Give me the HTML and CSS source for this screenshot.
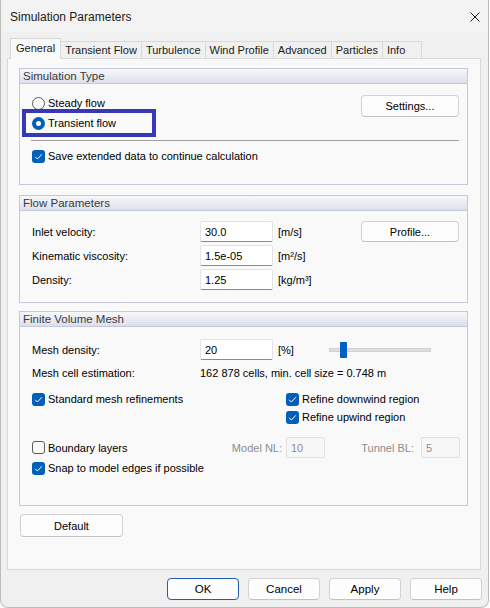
FILE: index.html
```html
<!DOCTYPE html>
<html lang="en">
<head>
  <meta charset="UTF-8" />
  <title>Simulation Parameters</title>
  <link rel="stylesheet" href="styles.css">
</head>
<body>
  <div class="window">
    <div class="titlebar">
      <span class="title">Simulation Parameters</span>
      <span class="close">
        <svg width="10" height="10" viewBox="0 0 10 10"><path d="M0.5 0.5 L9.5 9.5 M9.5 0.5 L0.5 9.5" stroke="#1b1b1b" stroke-width="1" fill="none"/></svg>
      </span>
    </div>

    <div class="tabs">
      <div class="tab active">General</div>
      <div class="tab">Transient Flow</div>
      <div class="tab">Turbulence</div>
      <div class="tab">Wind Profile</div>
      <div class="tab">Advanced</div>
      <div class="tab">Particles</div>
      <div class="tab">Info</div>
    </div>

    <div class="panel">
      <!-- simulation type -->
      <div class="group group-type">
        <div class="group-head">Simulation Type</div>
        <div class="group-body">
          <div class="type-row">
            <div class="radios">
              <label class="radio"><span class="dot"></span>Steady flow</label>
              <label class="radio checked marked"><span class="dot"></span>Transient flow</label>
            </div>
            <button class="btn side-btn">Settings...</button>
          </div>
          <div class="separator"></div>
          <label class="check checked"><span class="box"><svg width="13" height="13" viewBox="0 0 13 13"><path d="M3.2 6.8 L5.4 9 L9.8 4.3" stroke="#fff" stroke-width="1" fill="none"/></svg></span>Save extended data to continue calculation</label>
        </div>
      </div>

      <!-- flow parameters -->
      <div class="group group-flow">
        <div class="group-head">Flow Parameters</div>
        <div class="group-body">
          <div class="field-row">
            <span class="field-label">Inlet velocity:</span>
            <input class="field" type="text" value="30.0">
            <span class="unit">[m/s]</span>
            <button class="btn side-btn">Profile...</button>
          </div>
          <div class="field-row">
            <span class="field-label">Kinematic viscosity:</span>
            <input class="field" type="text" value="1.5e-05">
            <span class="unit">[m²/s]</span>
          </div>
          <div class="field-row">
            <span class="field-label">Density:</span>
            <input class="field" type="text" value="1.25">
            <span class="unit">[kg/m³]</span>
          </div>
        </div>
      </div>

      <!-- mesh -->
      <div class="group group-mesh">
        <div class="group-head">Finite Volume Mesh</div>
        <div class="group-body">
          <div class="field-row">
            <span class="field-label">Mesh density:</span>
            <input class="field" type="text" value="20">
            <span class="unit unit-wide">[%]</span>
            <div class="slider"><div class="track"></div><div class="thumb"></div></div>
          </div>
          <div class="text-row estimate">
            <span class="field-label">Mesh cell estimation:</span>
            <span>162 878 cells, min. cell size = 0.748 m</span>
          </div>
          <div class="text-row refine">
            <label class="check checked col-left"><span class="box"><svg width="13" height="13" viewBox="0 0 13 13"><path d="M3.2 6.8 L5.4 9 L9.8 4.3" stroke="#fff" stroke-width="1" fill="none"/></svg></span>Standard mesh refinements</label>
            <label class="check checked"><span class="box"><svg width="13" height="13" viewBox="0 0 13 13"><path d="M3.2 6.8 L5.4 9 L9.8 4.3" stroke="#fff" stroke-width="1" fill="none"/></svg></span>Refine downwind region</label>
          </div>
          <div class="text-row tight">
            <span class="col-left"></span>
            <label class="check checked"><span class="box"><svg width="13" height="13" viewBox="0 0 13 13"><path d="M3.2 6.8 L5.4 9 L9.8 4.3" stroke="#fff" stroke-width="1" fill="none"/></svg></span>Refine upwind region</label>
          </div>
          <div class="field-row layers">
            <label class="check layers-check"><span class="box"></span>Boundary layers</label>
            <span class="dim-label nl-label">Model NL:</span>
            <input class="field small" type="text" value="10" disabled>
            <span class="dim-label bl-label">Tunnel BL:</span>
            <input class="field small" type="text" value="5" disabled>
          </div>
          <div class="text-row tight">
            <label class="check checked"><span class="box"><svg width="13" height="13" viewBox="0 0 13 13"><path d="M3.2 6.8 L5.4 9 L9.8 4.3" stroke="#fff" stroke-width="1" fill="none"/></svg></span>Snap to model edges if possible</label>
          </div>
        </div>
      </div>

      <button class="btn default-btn">Default</button>
    </div>

    <div class="footer">
      <button class="btn dlg-btn primary">OK</button>
      <button class="btn dlg-btn">Cancel</button>
      <button class="btn dlg-btn">Apply</button>
      <button class="btn dlg-btn">Help</button>
    </div>
  </div>
</body>
</html>
```

FILE: styles.css
```css
* {
  box-sizing: border-box;
  margin: 0;
  padding: 0;
}
body {
  background: #fff;
  font-family: "Liberation Sans", Arial, sans-serif;
  font-size: 11px;
  color: #000;
}
.window {
  width: 489px;
  height: 608px;
  background: #f0f0f0;
  border: 1px solid #bcbcbc;
  border-top: none;
  border-radius: 0 0 8px 8px;
  display: flex;
  flex-direction: column;
}
.titlebar {
  height: 32px;
  display: flex;
  align-items: center;
  justify-content: space-between;
  padding: 1px 8px 0 9px;
  background: #f3f3f3;
}
.title {
  font-size: 12px;
  color: #1a1a1a;
}
.close {
  display: flex;
}

/* tab strip */
.tabs {
  display: flex;
  align-items: flex-end;
  padding: 6px 0 0 9px;
  height: 26px;
}
.tab {
  height: 17px;
  line-height: 16px;
  padding: 0 4px;
  min-width: 40px;
  border: 1px solid #d9d9d9;
  border-bottom: none;
  margin-left: -1px;
  background: #f0f0f0;
  color: #1a1a1a;
}
.tab.active {
  height: 21px;
  line-height: 18px;
  padding: 0 5px;
  margin-left: 0;
  margin-bottom: -1px;
  background: #f9f9f9;
  position: relative;
  z-index: 1;
}
.panel {
  margin: 0 7px 0 6px;
  height: 512px;
  background: #f9f9f9;
  border: 1px solid #d9d9d9;
  padding: 9px 12px 0 11px;
}

/* group boxes */
.group {
  border: 1px solid #c4c8dc;
  background: #f9f9f9;
}
.group + .group {
  margin-top: 10px;
}
.group-mesh {
  margin-top: 8px !important;
}
.group-head {
  height: 15px;
  line-height: 14px;
  padding-left: 3px;
  background: linear-gradient(to bottom, #f7f8fb, #dcdfec);
  border-bottom: 1px solid #c4c8dc;
  color: #3a3a3a;
  font-size: 11.5px;
}
.group-body {
  padding: 9px 8px 0 12px;
}
.group-type .group-body {
  height: 100px;
}
.group-flow .group-body {
  padding-top: 10px;
  padding-bottom: 12px;
}
.group-mesh .group-body {
  padding-top: 12px;
  height: 178px;
}

/* simulation type */
.type-row {
  display: flex;
  align-items: flex-start;
}
.radios {
  display: flex;
  flex-direction: column;
}
.radio {
  display: flex;
  align-items: center;
  height: 20px;
  position: relative;
}
.radio .dot {
  width: 13px;
  height: 13px;
  border-radius: 50%;
  border: 1px solid #5c5c5c;
  background: #fafafa;
  margin-right: 3px;
}
.radio.checked .dot {
  border: 4px solid #005fb8;
  background: #fff;
}
.radio.marked::after {
  content: "";
  box-sizing: border-box;
  position: absolute;
  left: -10px;
  top: -4px;
  width: 134px;
  height: 28px;
  border: 4px solid #3838b4;
}
.separator {
  height: 1px;
  background: #a0a0a0;
  margin: 7px 0 0 -1px;
}
.check {
  display: flex;
  align-items: center;
  height: 16px;
}
.group-type .check {
  margin-top: 7px;
}
.check .box {
  width: 13px;
  height: 13px;
  border-radius: 3px;
  border: 1px solid #5c5c5c;
  background: #fafafa;
  margin-right: 3px;
  display: flex;
}
.check.checked .box {
  border: none;
  background: #005fb8;
}

/* buttons */
.btn {
  font-family: inherit;
  font-size: 11px;
  color: #000;
  background: #fdfdfd;
  border: 1px solid #d2d2d2;
  border-bottom-color: #c2c2c2;
  border-radius: 4px;
}
.side-btn {
  margin-left: auto;
  width: 98px;
  height: 22px;
  margin-top: 2px;
}
.default-btn {
  width: 103px;
  height: 23px;
  margin: 8px 0 0 1px;
}

/* fields */
.field-row {
  display: flex;
  align-items: center;
  height: 21px;
}
.field-row + .field-row {
  margin-top: 3px;
}
.field-label {
  width: 168px;
  flex: none;
}
.field {
  width: 73px;
  height: 21px;
  padding: 0 4px;
  font-family: inherit;
  font-size: 11px;
  color: #000;
  background: #fff;
  border: 1px solid #e3e3e3;
  border-bottom-color: #8a8a8a;
  border-radius: 2px;
  outline: none;
}
.field.small {
  width: 39px;
  border-color: #e1e1e1;
  background: #f7f7f7;
  color: #8c8c8c;
}
.unit {
  margin-left: 5px;
}
.unit-wide {
  width: 51px;
}
.group-flow .side-btn {
  margin-top: 0;
  height: 21px;
}

/* mesh density slider */
.slider {
  width: 102px;
  height: 16px;
  position: relative;
  display: flex;
  align-items: center;
}
.track {
  width: 100%;
  height: 4px;
  background: #dedede;
  border: 1px solid #d2d2d2;
}
.thumb {
  position: absolute;
  left: 11px;
  top: 0;
  width: 7px;
  height: 16px;
  background: #005fc4;
  border-radius: 1px;
}
.text-row {
  display: flex;
  align-items: center;
  height: 16px;
}
.estimate {
  margin-top: 5px;
}
.refine {
  margin-top: 10px;
}
.tight {
  margin-top: 2px;
}
.col-left {
  width: 254px;
  flex: none;
}
.field-row.layers {
  margin-top: 12px;
}
.layers-check {
  width: 198px;
  flex: none;
}
.dim-label {
  color: #8c8c8c;
  text-align: right;
  flex: none;
}
.nl-label {
  width: 52px;
  margin-right: 4px;
}
.bl-label {
  width: 89px;
  margin-right: 7px;
}

/* dialog buttons */
.footer {
  display: flex;
  justify-content: flex-end;
  gap: 9px;
  padding: 8px 6px 0 0;
}
.dlg-btn {
  width: 72px;
  height: 22px;
  font-size: 11.5px;
}
.dlg-btn.primary {
  border: 1px solid #1f5ea8;
}
```
